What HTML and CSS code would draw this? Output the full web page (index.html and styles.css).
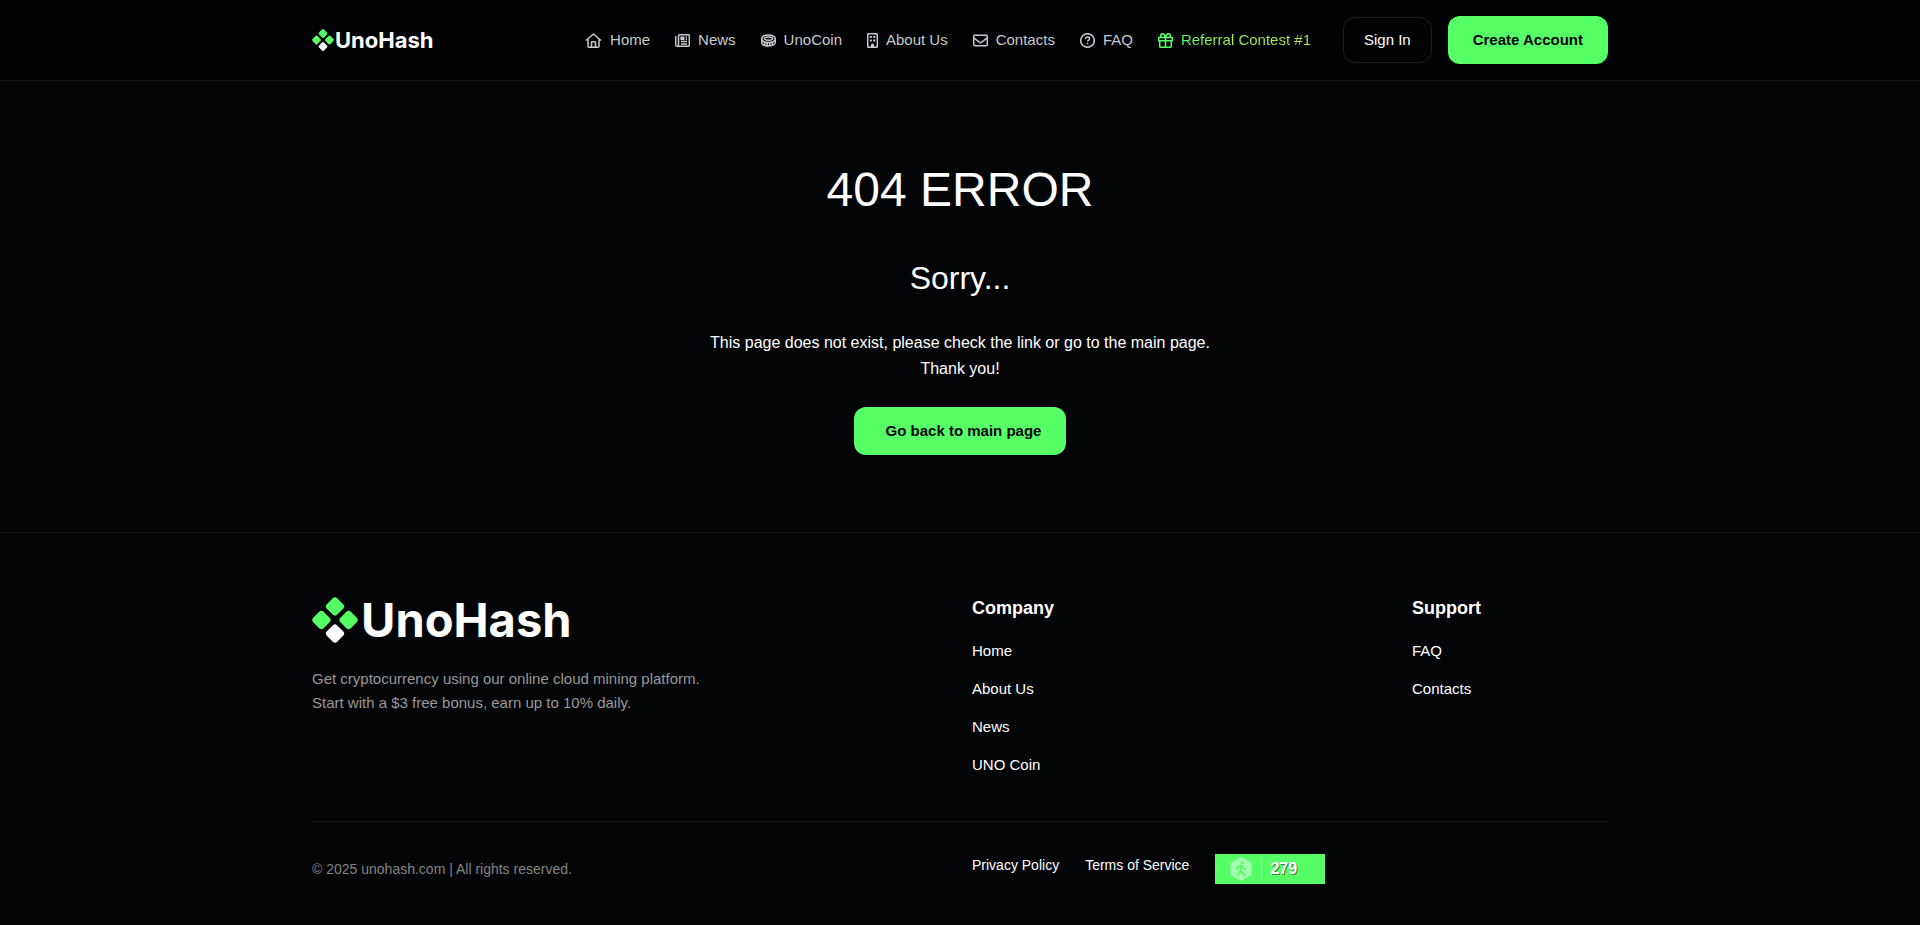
FILE: index.html
```html
<!DOCTYPE html>
<html lang="en">
<head>
  <meta charset="UTF-8" />
  <meta name="viewport" content="width=device-width, initial-scale=1.0"/>
  <title>404 - UnoHash</title>
  <link rel="stylesheet" href="styles.css">
</head>
<body>

  <header class="header">
    <div class="container header-inner">
      <a href="#" class="logo">
        <svg class="logo-mark" viewBox="0 0 44 44">
          <g fill="#57ff66">
            <rect x="15" y="2" width="14" height="14" rx="3" transform="rotate(45 22 9)"/>
            <rect x="2" y="15" width="14" height="14" rx="3" transform="rotate(45 9 22)"/>
            <rect x="28" y="15" width="14" height="14" rx="3" transform="rotate(45 35 22)"/>
          </g>
          <rect x="15" y="28" width="14" height="14" rx="3" transform="rotate(45 22 35)" fill="#fff"/>
        </svg>
        <span>UnoHash</span>
      </a>

      <nav class="nav">
        <a href="#">
          <svg class="icon icon-wide" viewBox="0 0 17 15"><path d="M1 7.500 8.500 1 16 7.500M3 6v7.200q0 1 1 1h9q1 0 1-1V6M6.500 14V9.300q0-.6.6-.6h2.800q.6 0 .6.6V14"/></svg>
          Home
        </a>
        <a href="#">
          <svg class="icon" viewBox="0 0 15 15"><path d="M3.500 12.300V2.800q0-1.100 1.100-1.100h8.600q1.100 0 1.100 1.100v9.400q0 1.100-1.100 1.100H2q-1.300 0-1.300-1.300V3M3.500 12q0 1.300-1.300 1.300M6 8.500h6M6 10.900h6M10.600 4.200H12M10.600 6.300H12"/><path class="fill" d="M5.400 3.500h4v3.600h-4z"/></svg>
          News
        </a>
        <a href="#">
          <svg class="icon" viewBox="0 0 15 15"><path d="M.7 5.800C.7 3.600 3.500 2 7.500 2s6.800 1.600 6.800 3.800-2.800 3.700-6.800 3.700S.7 8 .7 5.800zM.7 5.800v3.400C.7 11.500 3.500 13 7.500 13s6.800-1.500 6.800-3.800V5.800M3.700 9v3M6.200 9.600v3M8.800 9.600v3M11.300 9v3"/><ellipse cx="7.500" cy="5.600" rx="4.200" ry="1.700"/></svg>
          UnoCoin
        </a>
        <a href="#">
          <svg class="icon icon-narrow" viewBox="0 0 11 15"><rect x=".7" y=".7" width="9.600" height="13.600" rx="1.200"/><path class="fill" d="M2.800 3h2v2h-2zM6.200 3h2v2h-2zM2.800 6.400h2v2h-2zM6.200 6.400h2v2h-2zM3.900 14v-2q0-1.600 1.600-1.600T7.100 12v2z"/></svg>
          About Us
        </a>
        <a href="#">
          <svg class="icon" viewBox="0 0 15 15"><rect x=".7" y="2.200" width="13.600" height="10.600" rx="1.300"/><path d="m1 5.200 5.300 4q1.200.9 2.400 0l5.300-4"/></svg>
          Contacts
        </a>
        <a href="#">
          <svg class="icon" viewBox="0 0 15 15"><circle cx="7.500" cy="7.500" r="6.800"/><path d="M5.400 5.800q.2-1.700 2.100-1.700 2 0 2 1.600 0 1-1 1.600-1 .5-1 1.300"/><path class="fill" d="M6.700 9.800h1.600v1.500H6.700z"/></svg>
          FAQ
        </a>
        <a href="#" class="nav-contest">
          <svg class="icon" viewBox="0 0 15 15"><path d="M.7 4.600h13.600v3.200H.7zM1.700 8v5.300q0 1 1 1h9.600q1 0 1-1V8M7.500 4.500v9.800M7.300 4.500C6.900 2.200 6 .7 4.600.7 3.300.7 2.600 1.600 2.600 2.600c0 1.100.8 1.900 1.900 1.900zM7.700 4.500C8.100 2.200 9 .7 10.400.7c1.300 0 2 .9 2 1.900 0 1.100-.8 1.900-1.900 1.900z"/></svg>
          <span>Referral Contest #1</span>
        </a>
      </nav>

      <div class="header-buttons">
        <button type="button" class="btn-outline">Sign In</button>
        <button type="button" class="btn">Create Account</button>
      </div>
    </div>
  </header>

  <main class="error">
    <h1>404 ERROR</h1>
    <h2>Sorry...</h2>
    <p>This page does not exist, please check the link or go to the main page.<br>Thank you!</p>
    <button type="button" class="btn btn-back">Go back to main page</button>
  </main>

  <footer class="footer">
    <div class="container">
      <div class="footer-top">
        <div class="footer-about">
          <a href="#" class="logo logo-big">
            <svg class="logo-mark" viewBox="0 0 44 44">
              <g fill="#57ff66">
                <rect x="15" y="2" width="14" height="14" rx="3" transform="rotate(45 22 9)"/>
                <rect x="2" y="15" width="14" height="14" rx="3" transform="rotate(45 9 22)"/>
                <rect x="28" y="15" width="14" height="14" rx="3" transform="rotate(45 35 22)"/>
              </g>
              <rect x="15" y="28" width="14" height="14" rx="3" transform="rotate(45 22 35)" fill="#fff"/>
            </svg>
            <span>UnoHash</span>
          </a>
          <p>Get cryptocurrency using our online cloud mining platform.<br>Start with a $3 free bonus, earn up to 10% daily.</p>
        </div>
        <div class="footer-company">
          <h3>Company</h3>
          <ul>
            <li><a href="#">Home</a></li>
            <li><a href="#">About Us</a></li>
            <li><a href="#">News</a></li>
            <li><a href="#">UNO Coin</a></li>
          </ul>
        </div>
        <div class="footer-support">
          <h3>Support</h3>
          <ul>
            <li><a href="#">FAQ</a></li>
            <li><a href="#">Contacts</a></li>
          </ul>
        </div>
      </div>

      <div class="footer-bottom">
        <p class="copyright">© 2025 unohash.com | All rights reserved.</p>
        <div class="footer-links">
          <a href="#">Privacy Policy</a>
          <a href="#">Terms of Service</a>
          <a href="#" class="counter">
            <svg viewBox="0 0 22 24">
              <path d="M11 0 21.500 6v12L11 24 .5 18V6z" fill="#a5ffb0"/>
              <circle cx="12" cy="5.500" r="1.600" fill="#57ff66"/>
              <path d="M11 8v6l4 5M10.500 13.500 7.500 19.500M11 8.500 7.500 10v3M11.500 8.500l2 3 2.500.5" fill="none" stroke="#57ff66" stroke-width="1.800"/>
            </svg>
            <span>279</span>
          </a>
        </div>
      </div>
    </div>
  </footer>

</body>
</html>
```
FILE: styles.css
```css
* {
  box-sizing: border-box;
}

body {
  margin: 0;
  background: #030406;
  font-family: "Liberation Sans", Arial, sans-serif;
  font-size: 15px;
  line-height: 24px;
  color: #fff;
}

a {
  color: inherit;
  text-decoration: none;
}

h1, h2, h3, p, ul {
  margin: 0;
  padding: 0;
}

.container {
  max-width: 1320px;
  margin: 0 auto;
  padding: 0 12px;
}

/* header */
.header {
  background: #010204;
  border-bottom: 1px solid #131416;
}

.header-inner {
  display: flex;
  align-items: center;
  min-height: 80px;
}

.logo {
  display: flex;
  align-items: center;
  gap: 1px;
  font-family: Inter, sans-serif;
  font-size: 22px;
  font-weight: 700;
}

.logo-mark {
  width: 22px;
  height: 22px;
}

.nav {
  display: flex;
  gap: 25px;
  margin-left: auto;
  color: #c8c9c9;
}

.nav a {
  display: flex;
  align-items: center;
  gap: 8px;
}

.icon {
  width: 15px;
  height: 15px;
  fill: none;
  stroke: currentColor;
  stroke-width: 1.5;
  stroke-linejoin: round;
}

.icon-wide {
  width: 17px;
}

.icon-narrow {
  width: 11px;
}

.icon .fill {
  fill: currentColor;
  stroke: none;
}

.nav-contest {
  color: #57ff66;
}

.nav-contest span {
  background: linear-gradient(90deg, #57ff66, #a8f04e 40%, #b5e550);
  -webkit-background-clip: text;
  background-clip: text;
  color: transparent;
}

.header-buttons {
  display: flex;
  align-items: center;
  gap: 16px;
  margin-left: 32px;
}

.btn, .btn-outline {
  height: 48px;
  padding: 0 25px 2px;
  border: none;
  border-radius: 12px;
  background: #57ff66;
  color: #030406;
  font-family: inherit;
  font-size: 15px;
  font-weight: 700;
  cursor: pointer;
}

.btn-outline {
  height: 46px;
  padding: 0 20px 2px;
  border: 1px solid #1c1d1f;
  background: transparent;
  color: #fff;
  font-weight: 400;
}

/* error text */
.error {
  padding: 80px 12px 77px;
  text-align: center;
}

.error h1 {
  margin-bottom: 40px;
  font-size: 48px;
  font-weight: 400;
  line-height: 58px;
}

.error h2 {
  margin-bottom: 33px;
  font-size: 32px;
  font-weight: 400;
  line-height: 38px;
}

.error p {
  margin-bottom: 25px;
  font-size: 16px;
  line-height: 26px;
}

.btn-back {
  padding-left: 32px;
}

/* footer */
.footer {
  border-top: 1px solid #131416;
}

.footer-top, .footer-bottom {
  display: grid;
  grid-template-columns: repeat(12, 1fr);
  column-gap: 24px;
}

.footer-top {
  padding: 64px 0 44px;
}

.footer-about {
  grid-column: span 6;
  color: #989999;
}

.footer-company {
  grid-column: span 4;
}

.footer-support {
  grid-column: span 2;
}

.logo-big {
  gap: 3px;
  height: 46px;
  margin-bottom: 24px;
  font-size: 47px;
  color: #fff;
}

.logo-big .logo-mark {
  width: 46px;
  height: 46px;
}

.footer h3 {
  margin-bottom: 20px;
  font-size: 18px;
  line-height: 22px;
}

.footer ul {
  display: grid;
  gap: 14px;
  list-style: none;
}

.footer-bottom {
  padding: 32px 0 38px;
  border-top: 1px solid #131416;
  font-size: 14px;
  line-height: 22px;
}

.copyright {
  grid-column: span 6;
  align-self: center;
  color: #838484;
}

.footer-links {
  grid-column: span 6;
  display: flex;
  gap: 26px;
}

.counter {
  display: flex;
  align-items: center;
  width: 110px;
  height: 30px;
  padding-left: 15px;
  background: #57ff66;
}

.counter svg {
  width: 22px;
  height: 24px;
}

.counter span {
  margin-left: 9px;
  padding-left: 8px;
  border-left: 1px dotted #b9ffc0;
  font-size: 16px;
  font-weight: 700;
  text-shadow: 1px 1px 0 #3f7a48;
}
```
